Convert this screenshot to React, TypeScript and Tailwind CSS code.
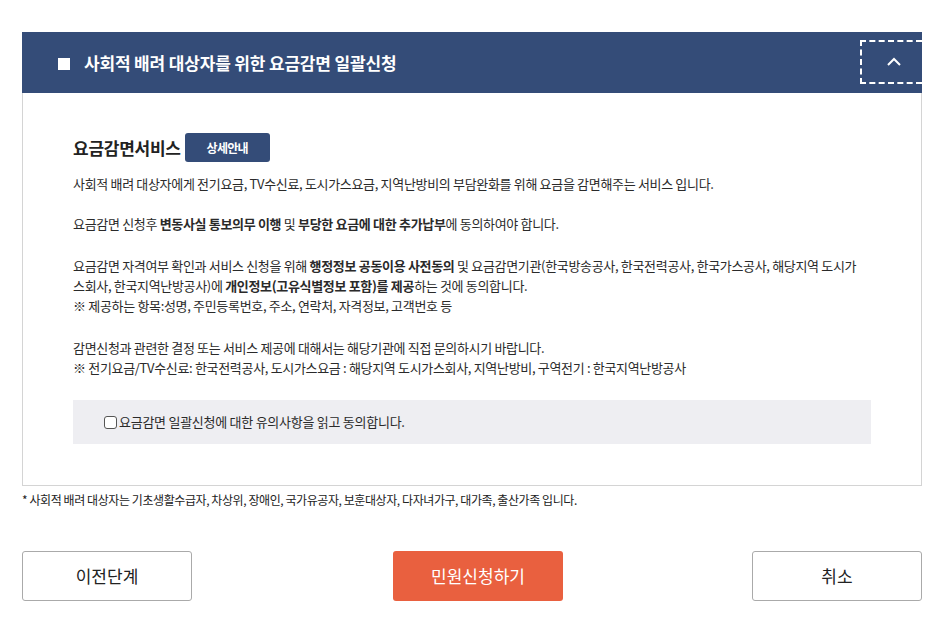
import React from "react";

const font = { fontFamily: '"Noto Sans CJK KR", "Noto Sans", sans-serif' };

const App = () => {
  return (
    <div className="bg-white w-[948px] min-h-[630px] pt-8 pl-[22px] pr-[26px] text-[#333]" style={font}>
      {/* header */}
      <div className="bg-[#344c78] h-[61px] flex items-center pl-[36px] relative">
        <span className="w-[12px] h-[12px] bg-white mr-[14px] mt-[2px]"></span>
        <h2 className="text-white text-[17px] font-bold tracking-[-0.01em]">
          사회적 배려 대상자를 위한 요금감면 일괄신청
        </h2>
        <button className="absolute right-0 top-[8px] w-[62px] h-[44px] border-2 border-r-0 border-dashed border-white flex items-center justify-center">
          <svg width="16" height="10" viewBox="0 0 16 10" fill="none" className="ml-1">
            <path d="M2 8 L8 2 L14 8" stroke="white" strokeWidth="2" />
          </svg>
        </button>
      </div>

      {/* body */}
      <div className="border border-t-0 border-[#d4d4d4] px-[50px] pt-10 pb-[41px]">
        <div className="flex items-center gap-[4px]">
          <h3 className="text-[17px] font-bold text-[#222] tracking-[-0.015em]">요금감면서비스</h3>
          <span className="bg-[#344c78] text-white text-[12px] font-bold rounded-[3px] w-[85px] h-[29px] flex items-center justify-center tracking-[-0.06em]">
            상세안내
          </span>
        </div>

        <div className="text-[13px] leading-[20px] tracking-[-0.025em] text-[#2a2a2a]">
          <p className="mt-3">
            사회적 배려 대상자에게 전기요금, TV수신료, 도시가스요금, 지역난방비의 부담완화를 위해 요금을 감면해주는 서비스 입니다.
          </p>
          <p className="mt-5">
            요금감면 신청후 <b>변동사실 통보의무 이행</b> 및 <b>부당한 요금에 대한 추가납부</b>에 동의하여야 합니다.
          </p>
          <p className="mt-[22px]">
            요금감면 자격여부 확인과 서비스 신청을 위해 <b>행정정보 공동이용 사전동의</b> 및 요금감면기관(한국방송공사, 한국전력공사, 한국가스공사, 해당지역 도시가
            <br />
            스회사, 한국지역난방공사)에 <b>개인정보(고유식별정보 포함)를 제공</b>하는 것에 동의합니다.
            <br />※ 제공하는 항목:성명, 주민등록번호, 주소, 연락처, 자격정보, 고객번호 등
          </p>
          <p className="mt-[22px]">
            감면신청과 관련한 결정 또는 서비스 제공에 대해서는 해당기관에 직접 문의하시기 바랍니다.
            <br />※ 전기요금/TV수신료: 한국전력공사, 도시가스요금 : 해당지역 도시가스회사, 지역난방비, 구역전기 : 한국지역난방공사
          </p>
        </div>

        <div className="mt-[22px] bg-[#eeeef2] h-[44px] flex items-center pl-[31px]">
          <label className="flex items-center gap-[2px] text-[13px] tracking-[-0.02em] text-[#2a2a2a]">
            <span className="w-[13px] h-[13px] border border-[#555] rounded-[3px] bg-white"></span>
            요금감면 일괄신청에 대한 유의사항을 읽고 동의합니다.
          </label>
        </div>
      </div>

      <p className="text-[12px] tracking-[-0.035em] text-[#222] mt-[6px] leading-[16px]">
        * 사회적 배려 대상자는 기초생활수급자, 차상위, 장애인, 국가유공자, 보훈대상자, 다자녀가구, 대가족, 출산가족 입니다.
      </p>

      {/* buttons */}
      <div className="mt-[43px] flex justify-between">
        <button className="w-[170px] h-[50px] border border-[#aaa] rounded-[3px] text-[17px] text-[#222] bg-white">
          이전단계
        </button>
        <button className="w-[170px] h-[50px] rounded-[3px] text-[17px] text-white bg-[#e9603f] ml-3">
          민원신청하기
        </button>
        <button className="w-[170px] h-[50px] border border-[#aaa] rounded-[3px] text-[17px] text-[#222] bg-white">
          취소
        </button>
      </div>
    </div>
  );
};

export default App;
